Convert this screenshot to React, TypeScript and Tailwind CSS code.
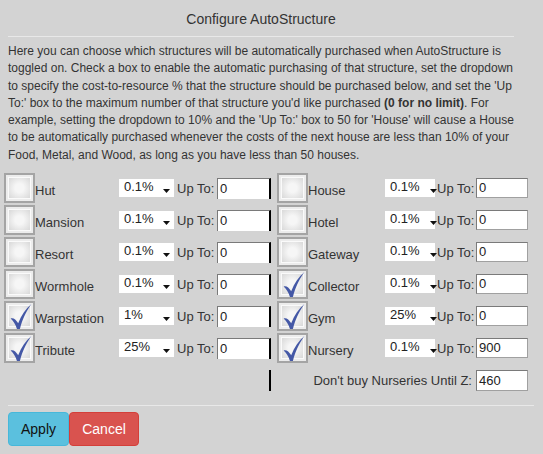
import React from "react";

type Item = { name: string; pct: string; upTo: string; checked: boolean };

const left: Item[] = [
  { name: "Hut", pct: "0.1%", upTo: "0", checked: false },
  { name: "Mansion", pct: "0.1%", upTo: "0", checked: false },
  { name: "Resort", pct: "0.1%", upTo: "0", checked: false },
  { name: "Wormhole", pct: "0.1%", upTo: "0", checked: false },
  { name: "Warpstation", pct: "1%", upTo: "0", checked: true },
  { name: "Tribute", pct: "25%", upTo: "0", checked: true },
];

const right: Item[] = [
  { name: "House", pct: "0.1%", upTo: "0", checked: false },
  { name: "Hotel", pct: "0.1%", upTo: "0", checked: false },
  { name: "Gateway", pct: "0.1%", upTo: "0", checked: false },
  { name: "Collector", pct: "0.1%", upTo: "0", checked: true },
  { name: "Gym", pct: "25%", upTo: "0", checked: true },
  { name: "Nursery", pct: "0.1%", upTo: "900", checked: true },
];

function Check({ checked }: { checked: boolean }) {
  return (
    <div className="relative w-[31px] h-[30px] shrink-0 border-2 border-[#a4a4a4] bg-[#ececec]">
      <div className="absolute inset-[2px] border border-[#fafafa] bg-[radial-gradient(circle,#f6f6f6_30%,#d8d8d8_100%)]" />
      {checked && (
        <svg className="absolute left-[2px] top-[0px]" width="25" height="27" viewBox="0 0 24 26">
          <path
            d="M2.5 15 C5 14 7.5 16 9.8 19.5 C12.8 12 16.8 5.5 22.5 1 C18 7.5 14 15 11.4 25 L8.6 25 C7.3 20.5 5 17.5 2.5 15 Z"
            fill="#4458a6"
          />
        </svg>
      )}
    </div>
  );
}

function Select({ value, w, arrowRight }: { value: string; w: string; arrowRight: string }) {
  return (
    <div className={`relative h-[18px] bg-white ${w} shrink-0`}>
      <span className="absolute left-[5px] top-[1px] text-[13px] leading-[14px] text-[#222]">{value}</span>
      <svg className={`absolute ${arrowRight} top-[10px]`} width="7" height="4" viewBox="0 0 7 4">
        <polygon points="0,0 7,0 3.5,4" fill="#111" />
      </svg>
    </div>
  );
}

function LeftRow({ it }: { it: Item }) {
  return (
    <div className="flex items-center h-[32px]">
      <Check checked={it.checked} />
      <span className="w-[84px] pt-[5px] text-[13px] leading-[15px] text-[#333]">{it.name}</span>
      <Select value={it.pct} w="w-[55px]" arrowRight="right-[4px]" />
      <span className="w-[43px] pl-[3px] text-[13px] leading-[15px] text-[#333]">Up To:</span>
      <div className="relative w-[54px] h-[21px] bg-white border-t border-l border-[#7a7a7a] border-r-2 border-r-black">
        <span className="absolute left-[2px] top-[2px] text-[13px] leading-[15px] text-[#222]">{it.upTo}</span>
      </div>
    </div>
  );
}

function RightRow({ it }: { it: Item }) {
  return (
    <div className="flex items-center h-[32px]">
      <Check checked={it.checked} />
      <span className="w-[77px] pt-[5px] text-[13px] leading-[15px] text-[#333]">{it.name}</span>
      <Select value={it.pct} w="w-[50px]" arrowRight="right-[-2px]" />
      <span className="w-[41px] pl-[2px] text-[13px] leading-[15px] text-[#333]">Up To:</span>
      <div className="relative w-[52px] h-[20px] bg-white border border-[#a0a0a0] border-t-[#7a7a7a] border-l-[#7a7a7a]">
        <span className="absolute left-[2px] top-[1px] text-[13px] leading-[15px] text-[#222]">{it.upTo}</span>
      </div>
    </div>
  );
}

export default function App() {
  return (
    <div className="w-[543px] h-[454px] overflow-hidden bg-[#d3d3d3] text-[#333] font-['Liberation_Sans',Arial,sans-serif]">
      <div className="ml-2 w-[506px] pt-[10px] pb-[8px] border-b border-[#e8e8e8] text-center text-[14px] leading-[18px]">
        Configure AutoStructure
      </div>
      <p className="ml-2 w-[506px] mt-[6px] text-[12px] leading-[17.3px]">
        Here you can choose which structures will be automatically purchased when AutoStructure is toggled on. Check a
        box to enable the automatic purchasing of that structure, set the dropdown to specify the cost-to-resource % that
        the structure should be purchased below, and set the 'Up To:' box to the maximum number of that structure you'd
        like purchased <b>(0 for no limit)</b>. For example, setting the dropdown to 10% and the 'Up To:' box to 50 for
        'House' will cause a House to be automatically purchased whenever the costs of the next house are less than 10%
        of your Food, Metal, and Wood, as long as you have less than 50 houses.
      </p>
      <div className="mt-[8px] flex">
        <div className="w-[271px] pl-[4px]">
          {left.map((it) => (
            <LeftRow key={it.name} it={it} />
          ))}
          <div className="flex h-[32px] items-center justify-end">
            <div className="w-[2px] h-[21px] bg-black" />
          </div>
        </div>
        <div className="pl-[6px]">
          {right.map((it) => (
            <RightRow key={it.name} it={it} />
          ))}
          <div className="flex h-[32px] items-center justify-end">
            <span className="pr-[4px] text-[13px] leading-[15px] text-[#333]">Don't buy Nurseries Until Z:</span>
            <div className="relative w-[52px] h-[21px] bg-white border border-[#a0a0a0] border-t-[#7a7a7a] border-l-[#7a7a7a]">
              <span className="absolute left-[2px] top-[2px] text-[13px] leading-[15px] text-[#222]">460</span>
            </div>
          </div>
        </div>
      </div>
      <div className="ml-2 w-[526px] mt-[9px] border-t border-[#e8e8e8]" />
      <div className="ml-2 mt-[6px] flex">
        <div className="w-[61px] h-[34px] flex items-center justify-center rounded-[4px] bg-[#5bc0de] border border-[#46b8da] text-[14px] text-[#111]">
          Apply
        </div>
        <div className="w-[70px] h-[34px] flex items-center justify-center rounded-[4px] bg-[#d9534f] border border-[#d43f3a] text-[14px] text-white">
          Cancel
        </div>
      </div>
    </div>
  );
}
